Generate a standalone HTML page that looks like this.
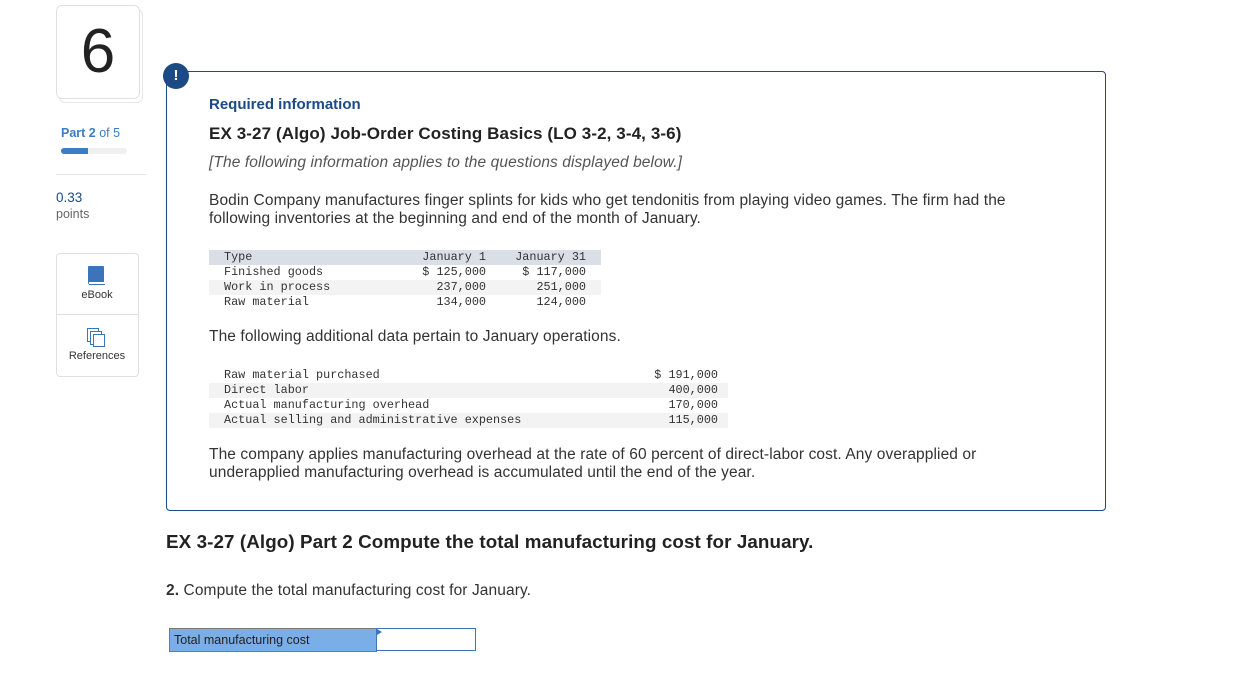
<!DOCTYPE html>
<html><head><meta charset="utf-8"><style>
body{margin:0;width:1241px;height:694px;background:#fff;font-family:"Liberation Sans",sans-serif;color:#333;position:relative;overflow:hidden}
.a{position:absolute;white-space:nowrap}
.t{font-size:15.5px;letter-spacing:0.1px}
.m{font-family:"Liberation Mono",monospace;font-size:11.8px;color:#333}
.r{position:absolute;height:15px;line-height:15px}
</style></head><body>
<div class="a" style="left:59px;top:9px;width:82px;height:92px;border:1px solid #e6e6e6;border-radius:6px"></div>
<div class="a" style="left:56px;top:5px;width:82px;height:92px;border:1px solid #e0e0e0;border-radius:6px;background:#fff;text-align:center;font-size:62px;line-height:92px;color:#222">6</div>
<div class="a" style="left:61px;top:126px;font-size:12.5px;color:#3b7dc4"><b>Part 2</b> of 5</div>
<div class="a" style="left:61px;top:148px;width:66px;height:6px;background:#f0f0f0;border-radius:3px"></div>
<div class="a" style="left:61px;top:148px;width:27px;height:6px;background:#3b7dc4;border-radius:3px 0 0 3px"></div>
<div class="a" style="left:56px;top:174px;width:90px;height:1px;background:#e6e6e6"></div>
<div class="a" style="left:56px;top:190px;font-size:13.5px;color:#1b4a85">0.33</div>
<div class="a" style="left:56px;top:207px;font-size:12.5px;color:#666">points</div>
<div class="a" style="left:56px;top:253px;width:81px;height:122px;border:1px solid #e0e0e0;border-radius:4px"></div>
<div class="a" style="left:56px;top:314px;width:82px;height:1px;background:#e0e0e0"></div>
<div class="a" style="left:88px;top:266px;width:16px;height:18px;background:#3b74b8;border-radius:1px"></div>
<div class="a" style="left:89px;top:282px;width:16px;height:2px;background:#fff;border-bottom:1px solid #3b74b8"></div>
<div class="a" style="left:56px;top:289px;width:82px;text-align:center;font-size:11px;color:#333">eBook</div>
<div class="a" style="left:87px;top:328px;width:10px;height:12px;border:1px solid #3b74b8;background:#fff"></div>
<div class="a" style="left:90px;top:331px;width:10px;height:12px;border:1px solid #3b74b8;background:#fff"></div>
<div class="a" style="left:93px;top:334px;width:10px;height:11px;border:1px solid #3b74b8;background:#fff"></div>
<div class="a" style="left:56px;top:350px;width:82px;text-align:center;font-size:11px;color:#333">References</div>

<div class="a" style="left:166px;top:71px;width:938px;height:438px;border:1px solid #1b4a85;border-radius:4px"></div>
<div class="a" style="left:163px;top:63px;width:26px;height:26px;border-radius:50%;background:#1b4a85;color:#fff;font-weight:bold;font-size:15px;text-align:center;line-height:26px">!</div>
<div class="a" style="left:209px;top:96px;font-size:15px;font-weight:bold;color:#1b4a85">Required information</div>
<div class="a" style="left:209px;top:124px;font-size:17px;font-weight:bold;color:#222;letter-spacing:0.1px">EX 3-27 (Algo) Job-Order Costing Basics (LO 3-2, 3-4, 3-6)</div>
<div class="a t" style="left:209px;top:154px;font-style:italic;color:#555">[The following information applies to the questions displayed below.]</div>
<div class="a t" style="left:209px;top:192px;line-height:18px;color:#333">Bodin Company manufactures finger splints for kids who get tendonitis from playing video games. The firm had the<br>following inventories at the beginning and end of the month of January.</div>

<div class="m">
<div class="r" style="left:209px;top:250px;width:392px;background:#d9dee7"></div>
<div class="r" style="left:209px;top:280px;width:392px;background:#f3f3f3"></div>
<div class="a" style="left:224px;top:250px;line-height:15px">Type<br>Finished goods<br>Work in process<br>Raw material</div>
<div class="a" style="left:386px;top:250px;width:100px;text-align:right;line-height:15px">January 1<br>$ 125,000<br>237,000<br>134,000</div>
<div class="a" style="left:486px;top:250px;width:100px;text-align:right;line-height:15px">January 31<br>$ 117,000<br>251,000<br>124,000</div>
</div>
<div class="a t" style="left:209px;top:328px">The following additional data pertain to January operations.</div>
<div class="m">
<div class="r" style="left:209px;top:383px;width:519px;background:#f3f3f3"></div>
<div class="r" style="left:209px;top:413px;width:519px;background:#f3f3f3"></div>
<div class="a" style="left:224px;top:368px;line-height:15px">Raw material purchased<br>Direct labor<br>Actual manufacturing overhead<br>Actual selling and administrative expenses</div>
<div class="a" style="left:600px;top:368px;width:118px;text-align:right;line-height:15px">$ 191,000<br>400,000<br>170,000<br>115,000</div>
</div>
<div class="a t" style="left:209px;top:446px;line-height:18px">The company applies manufacturing overhead at the rate of 60 percent of direct-labor cost. Any overapplied or<br>underapplied manufacturing overhead is accumulated until the end of the year.</div>

<div class="a" style="left:166px;top:531px;font-size:18.8px;font-weight:bold;color:#222;letter-spacing:0.1px">EX 3-27 (Algo) Part 2 Compute the total manufacturing cost for January.</div>
<div class="a t" style="left:166px;top:582px"><b>2.</b> Compute the total manufacturing cost for January.</div>
<div class="a" style="left:169px;top:628px;width:206px;height:22px;background:#7aaee6;border:1px solid #777;font-size:12.5px;line-height:22px;color:#222;text-indent:4px">Total manufacturing cost</div>
<div class="a" style="left:376px;top:628px;width:98px;height:21px;border:1px solid #3b74b8;background:#fff"></div>
<div class="a" style="left:377px;top:629px;width:0;height:0;border-left:5px solid #3b74b8;border-top:3px solid transparent;border-bottom:3px solid transparent"></div>
</body></html>
